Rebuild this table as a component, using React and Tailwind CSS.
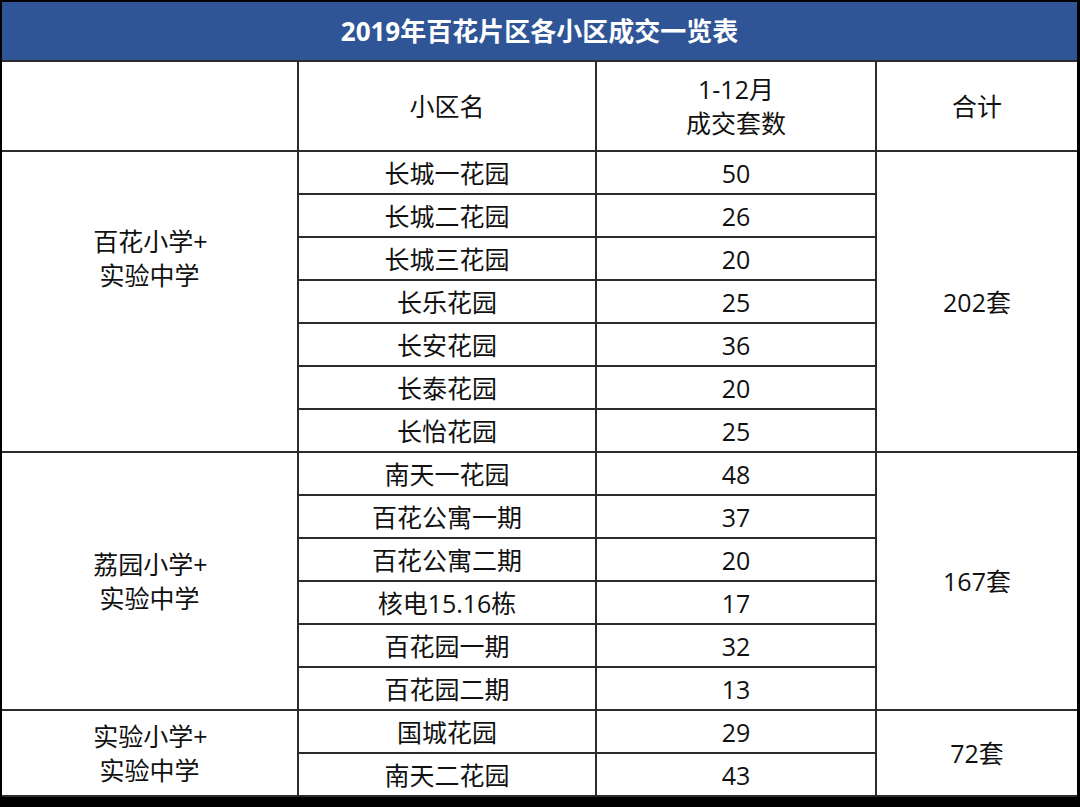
const groups = [
  {
    school: ["百花小学+", "实验中学"],
    total: "202套",
    span: "row-span-7",
    shift: "pb-[88px]",
    rows: [
      ["长城一花园", "50"],
      ["长城二花园", "26"],
      ["长城三花园", "20"],
      ["长乐花园", "25"],
      ["长安花园", "36"],
      ["长泰花园", "20"],
      ["长怡花园", "25"],
    ],
  },
  {
    school: ["荔园小学+", "实验中学"],
    total: "167套",
    span: "row-span-6",
    shift: "",
    rows: [
      ["南天一花园", "48"],
      ["百花公寓一期", "37"],
      ["百花公寓二期", "20"],
      ["核电15.16栋", "17"],
      ["百花园一期", "32"],
      ["百花园二期", "13"],
    ],
  },
  {
    school: ["实验小学+", "实验中学"],
    total: "72套",
    span: "row-span-2",
    shift: "",
    rows: [
      ["国城花园", "29"],
      ["南天二花园", "43"],
    ],
  },
];

const cell = "bg-white flex flex-col items-center justify-center text-[25px] leading-[34px] text-[#111]";

export default function App() {
  return (
    <div className="w-[1080px] h-[807px] bg-black pt-[2px] pl-[2px] pr-[3px] pb-[10px] font-['Open_Sans','Noto_Sans_CJK_SC',sans-serif]">
      <div className="grid grid-cols-[295px_296px_278px_200px] grid-rows-[58px_88px_repeat(15,41px)] gap-[2px] bg-[#2b2b2b] pb-[2px]">
        <div className="col-span-4 bg-[#2f5597] flex items-center justify-center text-white font-bold text-[26px]">
          2019年百花片区各小区成交一览表
        </div>
        <div className="bg-white" />
        <div className={cell}>小区名</div>
        <div className={cell}>
          <span>1-12月</span>
          <span>成交套数</span>
        </div>
        <div className={cell}>合计</div>
        {groups.map((g) =>
          g.rows.map((r, i) => [
            i === 0 && (
              <div key={g.total + "s"} className={`${cell} ${g.span} ${g.shift}`}>
                <span className="pl-[2px]">{g.school[0]}</span>
                <span>{g.school[1]}</span>
              </div>
            ),
            <div key={r[0]} className={cell}>{r[0]}</div>,
            <div key={r[0] + "n"} className={cell}>{r[1]}</div>,
            i === 0 && (
              <div key={g.total} className={`${cell} ${g.span}`}>{g.total}</div>
            ),
          ])
        )}
      </div>
    </div>
  );
}
